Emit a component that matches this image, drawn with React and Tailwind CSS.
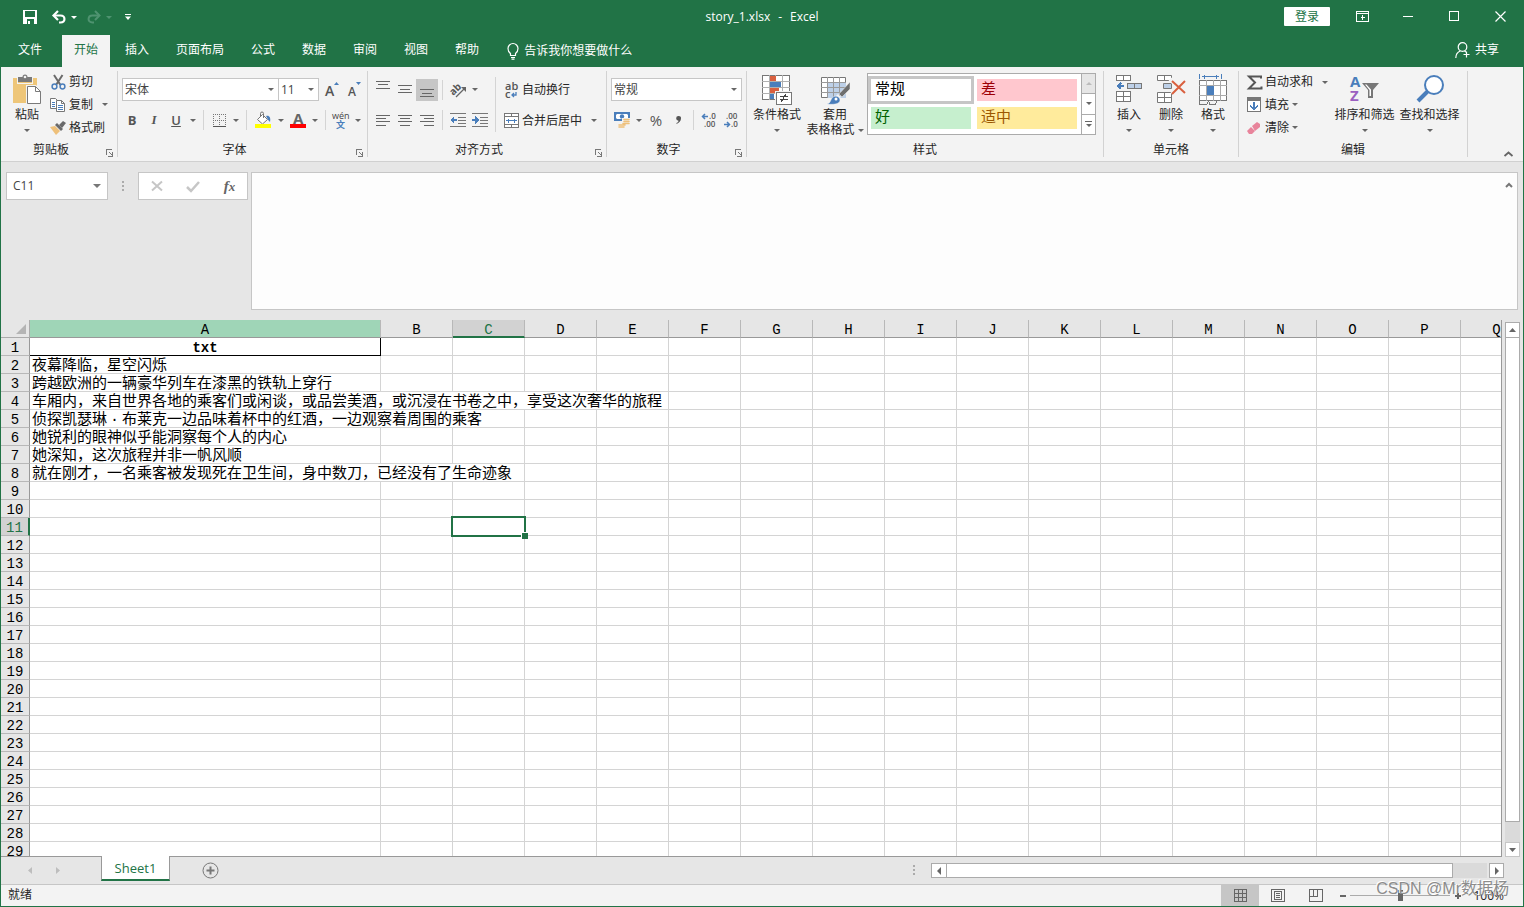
import React, { useState } from 'react';
import clsx from 'clsx';

const TABS = ['插入', '页面布局', '公式', '数据', '审阅', '视图', '帮助'];
const COLUMNS = 'ABCDEFGHIJKLMNOPQ'.split('');
const ROWS = Array.from({ length: 29 }, (_, i) => i + 1);

// SimSun-style full width middle dot
const WideDot = () => <span className="inline-block w-[15px] text-center">·</span>;

// spill: how many columns the text runs over
const CELLS = {
  2: { text: '夜幕降临，星空闪烁', spill: 0 },
  3: { text: '跨越欧洲的一辆豪华列车在漆黑的铁轨上穿行', spill: 0 },
  4: { text: '车厢内，来自世界各地的乘客们或闲谈，或品尝美酒，或沉浸在书卷之中，享受这次奢华的旅程', spill: 4 },
  5: { text: <>侦探凯瑟琳<WideDot />布莱克一边品味着杯中的红酒，一边观察着周围的乘客</>, spill: 2 },
  6: { text: '她锐利的眼神似乎能洞察每个人的内心', spill: 0 },
  7: { text: '她深知，这次旅程并非一帆风顺', spill: 0 },
  8: { text: '就在刚才，一名乘客被发现死在卫生间，身中数刀，已经没有了生命迹象', spill: 2 },
};

/* ── Small shared pieces ── */
const Svg = ({ w, h, crisp, className, children }) => (
  <svg
    width={w}
    height={h}
    viewBox={`0 0 ${w} ${h}`}
    fill="none"
    shapeRendering={crisp ? 'crispEdges' : undefined}
    className={clsx('shrink-0 overflow-visible', className)}
    aria-hidden="true"
  >
    {children}
  </svg>
);

const Caret = ({ className }) => (
  <Svg w={6} h={3} className={className}>
    <path d="M0 0h6L3 3z" fill="currentColor" />
  </Svg>
);

const CaretButton = ({ label }) => (
  <button type="button" aria-label={label} className="flex h-[22px] w-3 items-center justify-center text-[#666]">
    <Caret />
  </button>
);

const ToolButton = ({ label, wide, active, children }) => (
  <button
    type="button"
    aria-label={label}
    className={clsx('flex h-[22px] items-center justify-center', wide ? 'w-6' : 'w-[22px]', active && 'bg-[#c6c6c6]')}
  >
    {children}
  </button>
);

const Divider = () => <div className="mx-1 h-5 w-px bg-[#d4d4d4]" />;

const Group = ({ label, launcher, className, children }) => (
  <section aria-label={label} className={clsx('flex h-[86px] shrink-0 flex-col border-r border-[#d2d2d2]', className)}>
    <div className="flex h-[72px]">{children}</div>
    <div className="flex h-[14px] items-center">
      <span className="flex-1 text-center leading-4">{label}</span>
      {launcher && (
        <button type="button" aria-label={`${label}设置`} className="flex h-full w-4 items-end justify-end pr-[3px]">
          <Svg w={8} h={8} crisp>
            <path d="M0.500 6V0.500H6" stroke="#777" />
            <path d="M3 3l3 3" stroke="#777" />
            <path d="M7 3v5H2V7h4V3z" fill="#777" />
          </Svg>
        </button>
      )}
    </div>
  </section>
);

const BigButton = ({ icon, lines, className }) => (
  <button type="button" className={clsx('flex shrink-0 flex-col items-center pt-[3px] leading-4', className)}>
    <span className="flex h-[33px] items-start justify-center">{icon}</span>
    <span className="whitespace-nowrap">{lines[0]}</span>
    <span className="flex h-[14px] items-center gap-[3px] whitespace-nowrap">
      {lines[1]}
      <Caret className="text-[#666]" />
    </span>
  </button>
);

const SmallButton = ({ icon, text, caret, className }) => (
  <button type="button" className={clsx('flex items-center whitespace-nowrap', className)}>
    <span className="mr-[3px] flex w-4 justify-center">{icon}</span>
    {text}
    {caret === 'near' && <Caret className="ml-[3px] text-[#666]" />}
    {caret === 'far' && <Caret className="ml-[9px] text-[#666]" />}
  </button>
);

const Combo = ({ label, value, className }) => (
  <div className={clsx('relative h-[23px] border border-[#c6c6c6] bg-white', className)}>
    <select aria-label={label} defaultValue={value} className="h-full w-full appearance-none bg-transparent pl-[2px] text-[#444] outline-none">
      <option>{value}</option>
    </select>
    <Caret className="pointer-events-none absolute top-[9px] right-1 text-[#666]" />
  </div>
);

/* ── Ribbon icons ── */
const PasteIcon = () => (
  <Svg w={30} h={31}>
    <path d="M1 4h24v25H1z" fill="#eec679" />
    <path d="M6 3h4.500a2.500 2.500 0 0 1 5 0H20v5H6z" fill="#7a7a7a" />
    <path d="M5 3h1v6h14V3h1v7H5z" fill="#f3f3f3" />
    <circle cx="13" cy="3" r="1.300" fill="#f3f3f3" />
    <path d="M14 11h10l6 6v14H14z" fill="#f3f3f3" />
    <path d="M15.500 12.500h8l5 5v12h-13z" fill="#fff" stroke="#7a7a7a" />
    <path d="M23.500 12.500v5h5" stroke="#7a7a7a" />
  </Svg>
);

const CutIcon = () => (
  <Svg w={15} h={15}>
    <path d="M3 0l6.500 10M11.500 0L5 10" stroke="#6a6a6a" strokeWidth="2" />
    <circle cx="3.500" cy="11.500" r="2.400" stroke="#4a7ebb" strokeWidth="1.500" />
    <circle cx="11.500" cy="11.500" r="2.400" stroke="#4a7ebb" strokeWidth="1.500" />
  </Svg>
);

const CopyIcon = () => (
  <Svg w={16} h={14}>
    <path d="M0.500 0.500h5l2 2v8h-7z" fill="#fff" stroke="#777" />
    <path d="M2 4.500h3M2 6.500h3M2 8.500h3" stroke="#4a7ebb" />
    <path d="M6.500 2.500h5l3 3v8h-8z" fill="#fff" stroke="#777" />
    <path d="M11.500 2.500v3h3" stroke="#777" />
    <path d="M8 7.500h5M8 9.500h5M8 11.500h5" stroke="#4a7ebb" />
  </Svg>
);

const BrushIcon = () => (
  <Svg w={16} h={14}>
    <path d="M0 6l5-1 5 5-4 4z" fill="#eec07a" />
    <path d="M5 4l2-2 6 6-2 2z" fill="#6a6a6a" />
    <path d="M9 4l4-4 3 2-4 5z" fill="#6a6a6a" />
  </Svg>
);

const BordersIcon = () => (
  <Svg w={13} h={13} crisp>
    <path d="M0 0.500h13M0 6.500h13M0.500 0v13M6.500 0v13M12.500 0v13" stroke="#777" strokeDasharray="1 1" />
    <path d="M0 12.500h13" stroke="#555" />
  </Svg>
);

const FillColorIcon = () => (
  <Svg w={16} h={16}>
    <path d="M2.500 7.500l5-5 5 5-5 4.500z" fill="#fff" stroke="#777" />
    <path d="M5.500 5V1.500a1.500 1.500 0 0 1 3 0V6" stroke="#777" />
    <path d="M11 4c3-1 5 1 4 6-1-1-2-2-4-6z" fill="#4a7ebb" />
    <path d="M0 12h16v4H0z" fill="#ff0" />
  </Svg>
);

const HLines = ({ rows, h }) => (
  <Svg w={14} h={h} crisp>
    {rows.map(([x, y, len]) => (
      <path key={y} d={`M${x} ${y}.5h${len}`} stroke="#666" />
    ))}
  </Svg>
);

const OrientationIcon = () => (
  <Svg w={18} h={16}>
    <text x="1" y="12" fontSize="10" fontWeight="700" fill="#555" transform="rotate(-45 5 9)">ab</text>
    <path d="M7 15l8-8" stroke="#666" strokeWidth="1.300" />
    <path d="M12 5h5v5z" fill="#666" />
  </Svg>
);

const IndentIcon = ({ increase }) => (
  <Svg w={16} h={14} crisp>
    <path d="M0 0.500h16M8 4.500h8M8 7.500h8M8 10.500h8M0 13.500h16" stroke="#777" />
    {increase ? (
      <path d="M0 6h3V3l4 4-4 4V8H0z" fill="#4a7ebb" />
    ) : (
      <path d="M7 6H4V3L0 7l4 4V8h3z" fill="#4a7ebb" />
    )}
  </Svg>
);

const WrapIcon = () => (
  <Svg w={14} h={16}>
    <text x="1" y="8" fontSize="11" fontWeight="600" fill="#555">ab</text>
    <text x="1" y="16" fontSize="11" fontWeight="600" fill="#555">c</text>
    <path d="M12 10v3H8M10 11l-2 2 2 2" stroke="#4a7ebb" strokeWidth="1.300" />
  </Svg>
);

const MergeIcon = () => (
  <Svg w={15} h={15} crisp>
    <path d="M0.500 0.500h14v14H0.500zM0 3.500h15M0 11.500h15M7.500 0v3M7.500 12v3" fill="#fff" stroke="#777" />
    <path d="M2 7.500h11M4.500 5.500v4M10.500 5.500v4" stroke="#4a7ebb" />
  </Svg>
);

const CurrencyIcon = () => (
  <Svg w={17} h={16}>
    <path d="M0 0h16v9H0z" fill="#4a7ebb" />
    <path d="M2 3l1-1h10l1 1v3l-1 1H3L2 6z" fill="#fff" />
    <circle cx="8" cy="4.500" r="2.200" fill="#4a7ebb" />
    <path d="M8 6h9v7H8z" fill="#f3f3f3" />
    <path d="M10 7.500h5M10 9.500h5M9 11.500h6M5 13h6M5 15h5" stroke="#eec07a" strokeWidth="1.600" strokeLinecap="round" />
  </Svg>
);

const DecimalIcon = ({ increase }) => (
  <Svg w={16} h={14}>
    <text x={increase ? 8 : 3} y="6" fontSize="8" fontWeight="600" fill="#555">{increase ? '.0' : '.00'}</text>
    <text x={increase ? 3 : 8} y="14" fontSize="8" fontWeight="600" fill="#555">{increase ? '.00' : '.0'}</text>
    {increase ? (
      <path d="M7 3.500H2M4 1L1.500 3.500 4 6" stroke="#4a7ebb" strokeWidth="1.500" />
    ) : (
      <path d="M1 11.500h5M4 9l2.500 2.500L4 14" stroke="#4a7ebb" strokeWidth="1.500" />
    )}
  </Svg>
);

const ConditionalIcon = () => (
  <Svg w={30} h={31} crisp>
    <path d="M0.500 1.500h27v24H0.500z" fill="#fff" stroke="#777" />
    <path d="M0 7.500h28M0 13.500h28M0 19.500h28M7.500 1v25M13.500 1v25M20.500 1v25" stroke="#b0b0b0" />
    <path d="M8 2h6v5H8zM8 14h9v5H8z" fill="#d9603f" />
    <path d="M8 8h11v5H8zM8 20h4v5H8z" fill="#4a7ebb" />
    <path d="M13 17h17v14H13z" fill="#f3f3f3" />
    <path d="M14.500 18.500h15v12h-15z" fill="#fff" stroke="#777" />
    <path d="M18 22.500h8M18 25.500h8M19 28l5-8" stroke="#444" />
  </Svg>
);

const TableFormatIcon = () => (
  <Svg w={30} h={31}>
    <path d="M1.500 3.500h24v20h-24z" fill="#fff" stroke="#777" />
    <path d="M8 9h18v15H8z" fill="#bdd0e8" />
    <path d="M1 8.500h25M1 13.500h25M1 18.500h25M7.500 3v21M13.500 3v21M19.500 3v21" stroke="#999" />
    <path d="M15 24h12v7H15z" fill="#f3f3f3" />
    <path d="M30 8v7l-8 8-3-3z" fill="#6f6f6f" stroke="#f3f3f3" strokeWidth="0.500" />
    <path d="M18 20l3 3-2 2-3-3z" fill="#f3f3f3" />
    <path d="M7 30c4-1 3-4 6-7 3-2 7 0 7 3 0 4-6 5-13 4z" fill="#4a7ebb" stroke="#f3f3f3" strokeWidth="0.500" />
    <circle cx="16" cy="25" r="1.500" fill="#fff" />
  </Svg>
);

const InsertCellsIcon = () => (
  <Svg w={28} h={30} crisp>
    <path d="M1.500 1.500h14v5h-14zM8.500 1v6" fill="#fff" stroke="#777" />
    <path d="M12.500 9.500h14v5h-14z" fill="#bdd0e8" stroke="#777" />
    <path d="M19.500 9v6" stroke="#777" />
    <path d="M9 12h-6M6 9l-3 3 3 3" stroke="#4a7ebb" strokeWidth="2" />
    <path d="M1.500 17.500h14v10h-14zM8.500 17v11M1 22.500h15" fill="#fff" stroke="#777" />
  </Svg>
);

const DeleteCellsIcon = () => (
  <Svg w={30} h={30}>
    <path d="M1.500 1.500h14v5h-14zM8.500 1v6" fill="#fff" stroke="#777" />
    <path d="M7.500 9.500h8v5h-8z" fill="#bdd0e8" stroke="#777" />
    <path d="M1.500 18.500h14v10h-14zM8.500 18v11M1 23.500h15" fill="#fff" stroke="#777" />
    <path d="M14 5l15 15M29 6L16 20" stroke="#f3f3f3" strokeWidth="4" />
    <path d="M16 7l13 12M29 7L16 20" stroke="#d9603f" strokeWidth="2" />
  </Svg>
);

const FormatCellsIcon = () => (
  <Svg w={28} h={32} crisp>
    <path d="M0.500 0v5M22.500 0v5M3 2.500h17M5.500 0.500v4M17.500 0.500v4" stroke="#4a7ebb" />
    <path d="M0.500 6.500h27v20H0.500z" fill="#fff" stroke="#777" />
    <path d="M0 11.500h28M0 21.500h28M7.500 6v21M14.500 6v21M21.500 6v21" stroke="#aaa" />
    <path d="M8 12h7v9H8z" fill="#4a7ebb" />
    <path d="M0.500 27v3.500h7l2-3M10 27.500v3h6l2-3" stroke="#777" />
  </Svg>
);

const SortIcon = () => (
  <Svg w={30} h={30}>
    <text x="0" y="13" fontSize="15" fontWeight="700" fill="#4a7ebb">A</text>
    <text x="0" y="27" fontSize="15" fontWeight="700" fill="#9b5fc0">Z</text>
    <path d="M12 9h17l-6 7v8h-5v-8z" fill="#777" />
    <path d="M15 10.500h1.500l4.500 5V22h-1.500v-6z" fill="#fff" />
  </Svg>
);

const FindIcon = () => (
  <Svg w={28} h={30}>
    <path d="M2 27l10-10" stroke="#4a7ebb" strokeWidth="4" />
    <circle cx="18" cy="11" r="9" fill="#fff" stroke="#4a7ebb" strokeWidth="2" />
  </Svg>
);

const SumIcon = () => (
  <Svg w={15} h={15}>
    <path d="M14 3.500V1.500H2l6 6-6 6h12.500v-2" stroke="#555" strokeWidth="2" />
  </Svg>
);

const FillIcon = () => (
  <Svg w={14} h={15} crisp>
    <path d="M0.500 0.500h13v14H0.500z" fill="#fff" stroke="#777" />
    <path d="M0 0h14v4H0z" fill="#777" />
    <path d="M7 5v7M3 8.500l4 4 4-4" stroke="#4a7ebb" strokeWidth="2" />
  </Svg>
);

const EraserIcon = () => (
  <Svg w={14} h={12}>
    <path d="M5 4l5-4 3 2v3L8 9z" fill="#e8849b" />
    <path d="M4 5l4 4-3 3H2L0 9z" fill="#e8849b" />
  </Svg>
);

/* ── Title bar and tab strip ── */
const TitleBar = () => (
  <header className="grid h-[35px] grid-cols-[1fr_auto_1fr] bg-[#217346] text-white">
    <div className="flex h-[34px] items-center pl-[22px]">
      <button type="button" aria-label="保存" className="flex w-[29px]">
        <Svg w={14} h={14} crisp>
          <path d="M0 0h14v14H0z" fill="#fff" />
          <path d="M3 1h9v6H2V1zM4 9h7v5H4z" fill="#217346" />
          <path d="M5 11h2v3H5z" fill="#fff" />
        </Svg>
      </button>
      <button type="button" aria-label="撤消" className="flex items-center gap-[5px]">
        <Svg w={14} h={13}>
          <path d="M2 4.500h6.500c5 0 5.500 7 0 7H7" stroke="#fff" strokeWidth="2.200" />
          <path d="M6 0L1.500 4.500 6 9" stroke="#fff" strokeWidth="2.200" />
        </Svg>
        <Caret />
      </button>
      <button type="button" aria-label="恢复" className="ml-[10px] flex items-center gap-[5px] text-[#4f9370]">
        <Svg w={14} h={13}>
          <path d="M12 4.500H5.500c-5 0-5.500 7 0 7H7" stroke="currentColor" strokeWidth="2" />
          <path d="M8 0l4.500 4.500L8 9" stroke="currentColor" strokeWidth="2" />
        </Svg>
        <Caret />
      </button>
      <button type="button" aria-label="自定义快速访问工具栏" className="ml-[13px]">
        <Svg w={6} h={6}>
          <path d="M0 0.500h6" stroke="#fff" />
          <path d="M0 2.500h6L3 6z" fill="#fff" />
        </Svg>
      </button>
    </div>
    <h1 className="flex h-[34px] items-center gap-2">
      <span>story_1.xlsx</span>
      <span>-</span>
      <span>Excel</span>
    </h1>
    <div className="flex h-8 items-center justify-end">
      <button type="button" className="mr-[9px] h-[19px] rounded-[1px] bg-white px-[11px] leading-5 text-[#217346]">登录</button>
      <button type="button" aria-label="功能区显示选项" className="flex w-[46px] justify-center">
        <Svg w={13} h={11} crisp>
          <path d="M0.500 0.500h12v10H0.500zM0 2.500h13M6.500 9V4M4.500 6.500h4" stroke="#fff" />
        </Svg>
      </button>
      <button type="button" aria-label="最小化" className="flex w-[46px] justify-center">
        <Svg w={10} h={1} crisp><path d="M0 0.500h10" stroke="#fff" /></Svg>
      </button>
      <button type="button" aria-label="最大化" className="flex w-[46px] justify-center">
        <Svg w={10} h={10} crisp><path d="M0.500 0.500h9v9h-9z" stroke="#fff" /></Svg>
      </button>
      <button type="button" aria-label="关闭" className="flex w-[46px] justify-center">
        <Svg w={11} h={11}><path d="M0.500 0.500l10 10M10.500 0.500l-10 10" stroke="#fff" strokeWidth="1.200" /></Svg>
      </button>
    </div>
  </header>
);

const TabStrip = () => (
  <nav className="flex h-8 items-stretch gap-[3px] bg-[#217346] text-white">
    <button type="button" className="w-[58px] pb-[2px]">文件</button>
    <button type="button" className="bg-[#f3f3f3] px-3 pb-[2px] text-[#217346]">开始</button>
    {TABS.map((tab) => (
      <button key={tab} type="button" className="px-3 pb-[2px]">{tab}</button>
    ))}
    <button type="button" className="ml-[13px] flex items-center gap-[5px]">
      <Svg w={12} h={17}>
        <path d="M3.500 12.500v-2C1.500 9 1 7.500 1 5.500a5 5 0 0 1 10 0c0 2-0.500 3.500-2.500 5v2zM4 14.500h4M4.500 16.200h3" stroke="#fff" strokeWidth="1.200" />
      </Svg>
      告诉我你想要做什么
    </button>
    <button type="button" className="mr-[24px] ml-auto flex items-center gap-[5px] pb-[3px]">
      <Svg w={15} h={16}>
        <circle cx="7.500" cy="5" r="4.300" stroke="#fff" strokeWidth="1.200" />
        <path d="M0.800 16c0-4 2-6 4.500-7M9.500 9l1.500 1M11.500 9.500v6M8.500 12.500h6" stroke="#fff" strokeWidth="1.200" />
      </Svg>
      共享
    </button>
  </nav>
);

/* ── Ribbon ── */
const Ribbon = () => (
  <div className="flex h-[95px] items-start border-b border-[#d0d0d0] bg-[#f3f3f3] pt-1 text-[#262626]">
    <Group label="剪贴板" launcher className="w-[117px]">
      <BigButton icon={<PasteIcon />} lines={['粘贴']} className="ml-[3px] w-[46px]" />
      <div className="flex flex-col">
        <SmallButton icon={<CutIcon />} text="剪切" className="h-[22px]" />
        <SmallButton icon={<CopyIcon />} text="复制" caret="far" className="h-[23px]" />
        <SmallButton icon={<BrushIcon />} text="格式刷" className="h-[23px]" />
      </div>
    </Group>

    <Group label="字体" launcher className="w-[250px]">
      <div className="flex flex-col gap-2 pt-[7px] pl-[3px]">
        <div className="flex pl-px">
          <Combo label="字体" value="宋体" className="w-[157px]" />
          <Combo label="字号" value="11" className="w-10 border-l-0" />
          <ToolButton label="增大字号" wide>
            <Svg w={13} h={16}>
              <text x="0" y="15" fontSize="14" fontWeight="600" fill="#555">A</text>
              <path d="M9 4h5l-2.500-3z" fill="#4a7ebb" />
            </Svg>
          </ToolButton>
          <ToolButton label="减小字号">
            <Svg w={12} h={16}>
              <text x="0" y="15" fontSize="12" fontWeight="600" fill="#555">A</text>
              <path d="M8 1h5l-2.500 3z" fill="#4a7ebb" />
            </Svg>
          </ToolButton>
        </div>
        <div className="flex items-center text-[13px] text-[#555]">
          <ToolButton label="加粗"><b>B</b></ToolButton>
          <ToolButton label="倾斜"><i className="font-['Liberation_Serif',serif] font-bold">I</i></ToolButton>
          <ToolButton label="下划线"><span className="font-semibold underline">U</span></ToolButton>
          <CaretButton label="下划线选项" />
          <Divider />
          <ToolButton label="边框"><BordersIcon /></ToolButton>
          <CaretButton label="边框选项" />
          <Divider />
          <ToolButton label="填充颜色" wide><FillColorIcon /></ToolButton>
          <CaretButton label="填充颜色选项" />
          <ToolButton label="字体颜色">
            <Svg w={16} h={16}>
              <text x="3" y="12" fontSize="15" fontWeight="700" fill="#666">A</text>
              <path d="M0 12h16v4H0z" fill="#f00" />
            </Svg>
          </ToolButton>
          <CaretButton label="字体颜色选项" />
          <Divider />
          <ToolButton label="拼音">
            <Svg w={18} h={18}>
              <text x="0" y="8" fontSize="9" fill="#444">wén</text>
              <text x="4" y="17" fontSize="9" fontWeight="700" fill="#4a7ebb">文</text>
            </Svg>
          </ToolButton>
          <CaretButton label="拼音选项" />
        </div>
      </div>
    </Group>

    <Group label="对齐方式" launcher className="w-[239px]">
      <div className="flex flex-col gap-2 pt-[7px] pl-1">
        <div className="flex h-[23px] items-center">
          <ToolButton label="顶端对齐"><HLines h={18} rows={[[0, 0, 14], [2, 3, 10], [0, 7, 14]]} /></ToolButton>
          <ToolButton label="垂直居中"><HLines h={10} rows={[[0, 0, 14], [2, 4, 10], [0, 7, 14]]} /></ToolButton>
          <ToolButton label="底端对齐" active><HLines h={14} rows={[[0, 6, 14], [2, 10, 10], [0, 13, 14]]} /></ToolButton>
          <Divider />
          <ToolButton label="方向"><OrientationIcon /></ToolButton>
          <CaretButton label="方向选项" />
        </div>
        <div className="flex items-center">
          <ToolButton label="左对齐"><HLines h={11} rows={[[0, 0, 14], [0, 3, 10], [0, 6, 14], [0, 10, 10]]} /></ToolButton>
          <ToolButton label="居中"><HLines h={11} rows={[[0, 0, 14], [2, 3, 10], [0, 6, 14], [2, 10, 10]]} /></ToolButton>
          <ToolButton label="右对齐"><HLines h={11} rows={[[0, 0, 14], [4, 3, 10], [0, 6, 14], [4, 10, 10]]} /></ToolButton>
          <Divider />
          <ToolButton label="减少缩进量"><IndentIcon /></ToolButton>
          <ToolButton label="增加缩进量"><IndentIcon increase /></ToolButton>
        </div>
      </div>
      <div className="mx-1 mt-[6px] h-[55px] w-px bg-[#d4d4d4]" />
      <div className="flex flex-col gap-2 pt-[7px] pl-[3px]">
        <SmallButton icon={<WrapIcon />} text="自动换行" className="h-[23px]" />
        <SmallButton icon={<MergeIcon />} text="合并后居中" caret="far" className="h-[23px]" />
      </div>
    </Group>

    <Group label="数字" launcher className="w-[140px]">
      <div className="flex flex-col gap-2 pt-[7px] pl-1">
        <Combo label="数字格式" value="常规" className="w-[131px]" />
        <div className="flex items-center text-[#555]">
          <ToolButton label="会计数字格式"><CurrencyIcon /></ToolButton>
          <CaretButton label="会计数字格式选项" />
          <ToolButton label="百分比样式"><span className="text-[15px] leading-4">%</span></ToolButton>
          <ToolButton label="千位分隔样式">
            <Svg w={5} h={8}>
              <path d="M2.500 0A2.200 2.200 0 0 1 5 2.500C5 5 3 7 0.500 8V7C2 6.300 2.500 5.500 2.500 4.700A2.300 2.300 0 0 1 2.500 0z" fill="#555" />
            </Svg>
          </ToolButton>
          <Divider />
          <ToolButton label="增加小数位数"><DecimalIcon increase /></ToolButton>
          <ToolButton label="减少小数位数"><DecimalIcon /></ToolButton>
        </div>
      </div>
    </Group>

    <Group label="样式" className="w-[357px]">
      <BigButton icon={<ConditionalIcon />} lines={['条件格式']} className="w-[60px]" />
      <BigButton icon={<TableFormatIcon />} lines={['套用', '表格格式']} className="mr-1 w-14" />
      <div className="mt-[2px] flex h-[62px] w-[229px] border border-[#ababab] bg-white">
        <div className="grid flex-1 grid-cols-2 gap-[6px] py-[5px] pr-1 pl-[3px] text-[15px] leading-[18px]">
          <button type="button" className="bg-white pb-1 pl-1 text-left text-black outline-3 outline-[#c6c6c6]">常规</button>
          <button type="button" className="bg-[#ffc7ce] pb-1 pl-1 text-left text-[#9c0006]">差</button>
          <button type="button" className="bg-[#c6efce] pb-1 pl-1 text-left text-[#006100]">好</button>
          <button type="button" className="bg-[#ffeb9c] pb-1 pl-1 text-left text-[#9c5700]">适中</button>
        </div>
        <div className="flex w-[14px] flex-col divide-y divide-[#ababab] border-l border-[#ababab] text-[#666]">
          <button type="button" aria-label="上一行" className="flex flex-1 items-center justify-center bg-[#e6e6e6] text-[#bbb]">
            <Caret className="rotate-180" />
          </button>
          <button type="button" aria-label="下一行" className="flex flex-1 items-center justify-center"><Caret /></button>
          <button type="button" aria-label="其他样式" className="flex flex-1 flex-col items-center justify-center gap-[2px]">
            <span className="h-px w-[7px] bg-[#666]" />
            <Caret />
          </button>
        </div>
      </div>
    </Group>

    <Group label="单元格" className="w-[135px]">
      <div className="flex pl-1">
        <BigButton icon={<InsertCellsIcon />} lines={['插入']} className="w-[42px]" />
        <BigButton icon={<DeleteCellsIcon />} lines={['删除']} className="w-[42px]" />
        <BigButton icon={<FormatCellsIcon />} lines={['格式']} className="w-[42px]" />
      </div>
    </Group>

    <Group label="编辑" className="w-[229px]">
      <div className="flex w-[93px] flex-col pl-[7px]">
        <SmallButton icon={<SumIcon />} text="自动求和" caret="far" className="h-[22px]" />
        <SmallButton icon={<FillIcon />} text="填充" caret="near" className="h-[23px]" />
        <SmallButton icon={<EraserIcon />} text="清除" caret="near" className="h-[23px]" />
      </div>
      <BigButton icon={<SortIcon />} lines={['排序和筛选']} className="w-[65px]" />
      <BigButton icon={<FindIcon />} lines={['查找和选择']} className="w-[65px]" />
    </Group>

    <button type="button" aria-label="折叠功能区" className="mr-[10px] mb-1 ml-auto self-end">
      <Svg w={9} h={6}><path d="M0.500 5l4-3.500 4 3.500" stroke="#666" strokeWidth="1.800" /></Svg>
    </button>
  </div>
);

/* ── Formula bar ── */
const Dots = () => (
  <Svg w={2} h={11} crisp>
    <path d="M0 0h2v2H0zM0 4h2v2H0zM0 8h2v2H0z" fill="#ababab" />
  </Svg>
);

const FormulaBar = () => (
  <div className="flex h-[158px] items-start pt-[10px] pr-[5px] pb-[10px] pl-[5px]">
    <div className="flex h-7 w-[102px] items-center border border-[#c6c6c6] bg-white pr-[6px]">
      <input aria-label="名称框" defaultValue="C11" className="w-full min-w-0 flex-1 pl-[6px] text-[#444] outline-none" />
      <Svg w={8} h={4}><path d="M0 0h8L4 4z" fill="#777" /></Svg>
    </div>
    <div className="flex h-7 w-[30px] items-center justify-center"><Dots /></div>
    <div className="mr-[3px] flex h-7 w-[110px] items-center justify-around border border-[#c6c6c6] bg-white">
      <button type="button" aria-label="取消">
        <Svg w={12} h={10}><path d="M1 0.500l10 9M11 0.500l-10 9" stroke="#c6c6c6" strokeWidth="2" /></Svg>
      </button>
      <button type="button" aria-label="输入">
        <Svg w={14} h={11}><path d="M1 6l4 4 8-9" stroke="#c6c6c6" strokeWidth="2.500" /></Svg>
      </button>
      <button type="button" className="font-['Liberation_Serif',serif] text-[15px] leading-4 font-bold text-[#666] italic">
        f<span className="text-[13px]">x</span>
      </button>
    </div>
    <div className="flex h-full flex-1 border border-[#c6c6c6] bg-[#fdfdfd]">
      <textarea aria-label="编辑栏" className="h-full flex-1 resize-none px-1 outline-none" />
      <button type="button" aria-label="折叠编辑栏" className="mt-[9px] mr-1 self-start">
        <Svg w={8} h={6}><path d="M1 5l3-3 3 3" stroke="#777" strokeWidth="2" /></Svg>
      </button>
    </div>
  </div>
);

/* ── Sheet ── */
const SelectionFrame = () => (
  <span className="pointer-events-none absolute -inset-[2px] z-10 border-2 border-[#217346]">
    <span className="absolute -right-[4px] -bottom-[4px] h-[7px] w-[7px] border-t border-l border-white bg-[#217346]" />
  </span>
);

const Sheet = () => (
  <div className="min-w-0 flex-1 overflow-hidden border-r border-b border-[#999] bg-white">
    <table className="w-[1532px] table-fixed border-separate border-spacing-0 font-['Liberation_Mono','Noto_Sans_CJK_SC',monospace] text-[14px] leading-[13px] text-black">
      <colgroup>
        <col className="w-[29px]" />
        <col className="w-[351px]" />
        {COLUMNS.slice(1).map((c) => <col key={c} className="w-[72px]" />)}
      </colgroup>
      <thead>
        <tr className="h-[18px]">
          <th aria-label="全选" className="border-r border-b border-[#ababab] bg-[#e6e6e6] p-0">
            <Svg w={10} h={10} className="mr-[3px] ml-auto"><path d="M10 0v10H0z" fill="#b4b4b4" /></Svg>
          </th>
          {COLUMNS.map((c) => (
            <th
              key={c}
              scope="col"
              className={clsx(
                'h-[18px] border-r border-r-[#b8b8b8] p-0 pt-1 font-normal',
                c === 'C' ? 'border-b-2 border-b-[#217346] bg-[#d2d2d2] leading-3 text-[#217346]' : 'border-b border-b-[#999]',
                c === 'A' && 'bg-[#9fd5b7]',
                c !== 'A' && c !== 'C' && 'bg-[#e6e6e6]'
              )}
            >
              {c}
            </th>
          ))}
        </tr>
      </thead>
      <tbody>
        {ROWS.map((r) => (
          <tr key={r} className="h-[18px]">
            <th
              scope="row"
              className={clsx(
                'h-[18px] border-b border-b-[#b8b8b8] p-0 pt-1 font-normal',
                r === 11 ? 'border-r-2 border-r-[#217346] bg-[#d2d2d2] text-[#217346]' : 'border-r border-r-[#999] bg-[#e6e6e6]'
              )}
            >
              {r}
            </th>
            {COLUMNS.map((c, i) => {
              const cell = CELLS[r];
              if (c === 'A' && r === 1) {
                return <td key={c} className="border-r border-b border-black p-0 pt-1 text-center font-bold">txt</td>;
              }
              return (
                <td
                  key={c}
                  className={clsx(
                    'relative h-[18px] border-b border-b-[#d4d4d4] p-0',
                    !(cell && i < cell.spill) && 'border-r border-r-[#d4d4d4]',
                    c === 'A' && cell && 'pt-1 pl-[2px] text-[15px] whitespace-nowrap'
                  )}
                >
                  {c === 'A' && cell ? cell.text : null}
                  {c === 'C' && r === 11 && <SelectionFrame />}
                </td>
              );
            })}
          </tr>
        ))}
      </tbody>
    </table>
  </div>
);

const VerticalScroll = () => (
  <div className="mr-[3px] ml-[3px] flex w-[15px] flex-col bg-[#dadada]">
    <div className="h-[2px] bg-[#e6e6e6]" />
    <button type="button" aria-label="向上滚动" className="flex h-4 items-center justify-center border border-[#ababab] bg-white">
      <Svg w={7} h={4}><path d="M0 4h7L3.500 0z" fill="#666" /></Svg>
    </button>
    <div className="-mt-px mb-5 flex-1 border border-[#ababab] bg-white" />
    <button type="button" aria-label="向下滚动" className="flex h-[15px] items-center justify-center border border-[#c6c6c6] bg-white">
      <Svg w={7} h={4}><path d="M0 0h7L3.500 4z" fill="#666" /></Svg>
    </button>
  </div>
);

const SheetTabs = () => (
  <div className="flex h-[27px] items-start">
    <div className="flex h-full w-[100px] items-center gap-6 pl-[27px] text-[#bdbdbd]">
      <button type="button" aria-label="上一个工作表"><Svg w={4} h={7}><path d="M4 0v7L0 3.500z" fill="currentColor" /></Svg></button>
      <button type="button" aria-label="下一个工作表"><Svg w={4} h={7}><path d="M0 0v7l4-3.500z" fill="currentColor" /></Svg></button>
    </div>
    <button type="button" className="-mt-px h-[25px] w-[69px] border-x border-b-2 border-x-[#999] border-b-[#217346] bg-white text-[13px] leading-[22px] text-[#217346]">
      Sheet1
    </button>
    <button type="button" aria-label="新工作表" className="ml-8 flex h-full items-center">
      <Svg w={17} h={17}>
        <circle cx="8.500" cy="8.500" r="7.500" stroke="#777" />
        <path d="M8.500 4.500v8M4.500 8.500h8" stroke="#777" strokeWidth="2" />
      </Svg>
    </button>
    <div className="mr-4 ml-auto flex h-full items-center"><Dots /></div>
    <div className="mt-[6px] mr-[19px] flex h-[15px] w-[573px] bg-[#dadada]">
      <button type="button" aria-label="向左滚动" className="flex w-4 items-center justify-center border border-[#ababab] bg-white">
        <Svg w={4} h={8}><path d="M4 0v8L0 4z" fill="#666" /></Svg>
      </button>
      <div className="mr-[34px] -ml-px flex-1 border border-[#ababab] bg-white" />
      <div className="w-[2px] bg-[#e6e6e6]" />
      <button type="button" aria-label="向右滚动" className="flex w-[15px] items-center justify-center border border-[#ababab] bg-white">
        <Svg w={4} h={8}><path d="M0 0v8l4-4z" fill="#666" /></Svg>
      </button>
    </div>
  </div>
);

/* ── Status bar ── */
const StatusBar = () => {
  const [zoom, setZoom] = useState(100);

  return (
    <footer className="relative flex h-[22px] items-stretch border-t border-[#c6c6c6] bg-[#f3f3f3] text-[#262626]">
      <span className="flex items-center pb-[2px] pl-[7px]">就绪</span>
      <div className="ml-auto flex">
        <button type="button" aria-label="普通" className="flex w-[38px] items-center justify-center bg-[#c6c6c6]">
          <Svg w={13} h={13} crisp><path d="M0.500 0.500h12v12H0.500zM4.500 0v13M8.500 0v13M0 4.500h13M0 8.500h13" stroke="#666" /></Svg>
        </button>
        <button type="button" aria-label="页面布局" className="flex w-[38px] items-center justify-center">
          <Svg w={14} h={13} crisp>
            <path d="M0.500 0.500h13v12H0.500zM3.500 2.500h7v8h-7zM5 4.500h4M5 6.500h4M5 8.500h4" stroke="#666" />
          </Svg>
        </button>
        <button type="button" aria-label="分页预览" className="flex w-[38px] items-center justify-center">
          <Svg w={14} h={13} crisp><path d="M0.500 0.500h13v12H0.500zM4.500 0v7M8.500 0v7.500M0 7.500h9" stroke="#666" /></Svg>
        </button>
      </div>
      <button type="button" aria-label="缩小" className="flex w-[15px] items-center justify-center">
        <span className="h-[2px] w-[6px] bg-[#666]" />
      </button>
      <input
        type="range"
        aria-label="缩放"
        min="0"
        max="200"
        value={zoom}
        onChange={(event) => setZoom(Number(event.target.value))}
        className="h-px w-[100px] appearance-none self-center bg-[#ababab] [&::-webkit-slider-thumb]:h-[11px] [&::-webkit-slider-thumb]:w-[5px] [&::-webkit-slider-thumb]:appearance-none [&::-webkit-slider-thumb]:bg-[#666]"
      />
      <button type="button" aria-label="放大" className="flex w-[15px] items-center justify-center">
        <Svg w={6} h={6} crisp><path d="M2 0h2v2h2v2H4v2H2V4H0V2h2z" fill="#666" /></Svg>
      </button>
      <span className="mr-[19px] ml-2 flex items-center">{zoom}%</span>
      <span className="pointer-events-none absolute -top-2 right-[14px] font-['Liberation_Sans','Noto_Sans_CJK_SC',sans-serif] text-[16px] leading-6 whitespace-nowrap text-[#8c8c8c] [text-shadow:-1px_-1px_0_#fff]">
        CSDN @Mr数据杨
      </span>
    </footer>
  );
};

const App = () => (
  <div className="flex h-screen flex-col overflow-hidden border-x border-b border-[#217346] bg-[#e6e6e6] font-['Open_Sans','Noto_Sans_CJK_SC',sans-serif] text-[12px] leading-4" lang="zh-CN">
    <TitleBar />
    <TabStrip />
    <Ribbon />
    <FormulaBar />
    <main className="flex min-h-0 flex-1">
      <Sheet />
      <VerticalScroll />
    </main>
    <SheetTabs />
    <StatusBar />
  </div>
);

export default App;
